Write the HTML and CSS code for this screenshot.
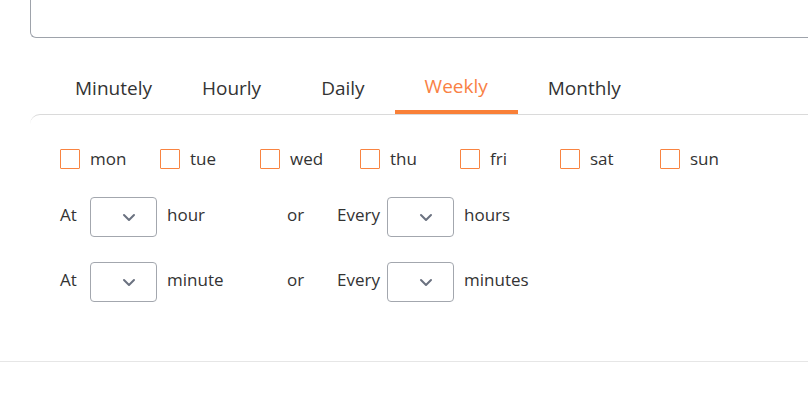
FILE: index.html
```html
<!DOCTYPE html>
<html lang="en">
<head>
<meta charset="utf-8">
<title>Cron</title>
<link rel="stylesheet" href="styles.css">
</head>
<body>
<div class="page">
  <div class="topbox"></div>
  <div class="tabs">
    <div class="tab">Minutely</div>
    <div class="tab">Hourly</div>
    <div class="tab">Daily</div>
    <div class="tab active">Weekly</div>
    <div class="tab">Monthly</div>
  </div>
  <div class="panel">
    <div class="days">
      <label class="day"><span class="box"></span><span class="txt">mon</span></label>
      <label class="day"><span class="box"></span><span class="txt">tue</span></label>
      <label class="day"><span class="box"></span><span class="txt">wed</span></label>
      <label class="day"><span class="box"></span><span class="txt">thu</span></label>
      <label class="day"><span class="box"></span><span class="txt">fri</span></label>
      <label class="day"><span class="box"></span><span class="txt">sat</span></label>
      <label class="day"><span class="box"></span><span class="txt">sun</span></label>
    </div>
    <div class="row">
      <span class="lbl lbl-at">At</span>
      <div class="select"><svg width="14" height="9" viewBox="0 0 14 9"><path d="M2 2 L7 7 L12 2" fill="none" stroke="#6b7280" stroke-width="2" stroke-linecap="round" stroke-linejoin="round"/></svg></div>
      <span class="lbl lbl-unit">hour</span>
      <span class="lbl lbl-or">or</span>
      <span class="lbl lbl-every">Every</span>
      <div class="select"><svg width="14" height="9" viewBox="0 0 14 9"><path d="M2 2 L7 7 L12 2" fill="none" stroke="#6b7280" stroke-width="2" stroke-linecap="round" stroke-linejoin="round"/></svg></div>
      <span class="lbl lbl-unit">hours</span>
    </div>
    <div class="row">
      <span class="lbl lbl-at">At</span>
      <div class="select"><svg width="14" height="9" viewBox="0 0 14 9"><path d="M2 2 L7 7 L12 2" fill="none" stroke="#6b7280" stroke-width="2" stroke-linecap="round" stroke-linejoin="round"/></svg></div>
      <span class="lbl lbl-unit">minute</span>
      <span class="lbl lbl-or">or</span>
      <span class="lbl lbl-every">Every</span>
      <div class="select"><svg width="14" height="9" viewBox="0 0 14 9"><path d="M2 2 L7 7 L12 2" fill="none" stroke="#6b7280" stroke-width="2" stroke-linecap="round" stroke-linejoin="round"/></svg></div>
      <span class="lbl lbl-unit">minutes</span>
    </div>
  </div>
  <div class="footer-line"></div>
</div>
</body>
</html>
```
FILE: styles.css
```css
html, body {
  margin: 0;
  padding: 0;
  background: #fff;
  overflow: hidden;
}
body {
  font-family: "Open Sans", "Noto Sans", sans-serif;
  color: #333333;
}
.page {
  width: 808px;
  height: 419px;
}
.topbox {
  margin-left: 30px;
  height: 37px;
  border: 1px solid #9ea3ab;
  border-top: none;
  border-right: none;
  border-bottom-left-radius: 6px;
}
.tabs {
  display: flex;
  margin-top: 32px;
  margin-left: 45px;
}
.tab {
  box-sizing: border-box;
  height: 44px;
  padding: 0 30px;
  font-size: 19px;
  line-height: 36px;
  border-bottom: 4px solid transparent;
  color: #333333;
}
.tab:first-child {
  padding-right: 20px;
}
.tab.active {
  line-height: 32px;
  color: #f98144;
  border-bottom-color: #f98038;
}
.panel {
  margin-left: 30px;
  border-top: 1px solid #dadada;
  border-top-left-radius: 10px;
  padding: 34px 0 0 30px;
  height: 213px;
  box-sizing: border-box;
}
.days {
  display: flex;
  margin-bottom: 28px;
}
.day {
  width: 100px;
  display: flex;
  align-items: center;
  gap: 10px;
  font-size: 17px;
  height: 20px;
}
.day .txt {
  padding-bottom: 2px;
}
.box {
  box-sizing: border-box;
  width: 20px;
  height: 20px;
  border: 1px solid #f98441;
  border-radius: 1px;
}
.row {
  display: flex;
  align-items: center;
  height: 40px;
  font-size: 17px;
}
.row + .row {
  margin-top: 25px;
}
.lbl {
  padding-bottom: 5px;
}
.lbl-at {
  width: 30px;
}
.select {
  box-sizing: border-box;
  width: 67px;
  height: 40px;
  border: 1px solid #a3a7ae;
  border-radius: 4px;
  display: flex;
  align-items: center;
  padding-left: 31px;
}
.select svg {
  display: block;
}
.lbl-unit {
  margin-left: 10px;
  width: 120px;
}
.lbl-or {
  width: 50px;
}
.lbl-every {
  width: 50px;
}
.footer-line {
  margin-top: 34px;
  border-top: 1px solid #e6e6e6;
}
```
